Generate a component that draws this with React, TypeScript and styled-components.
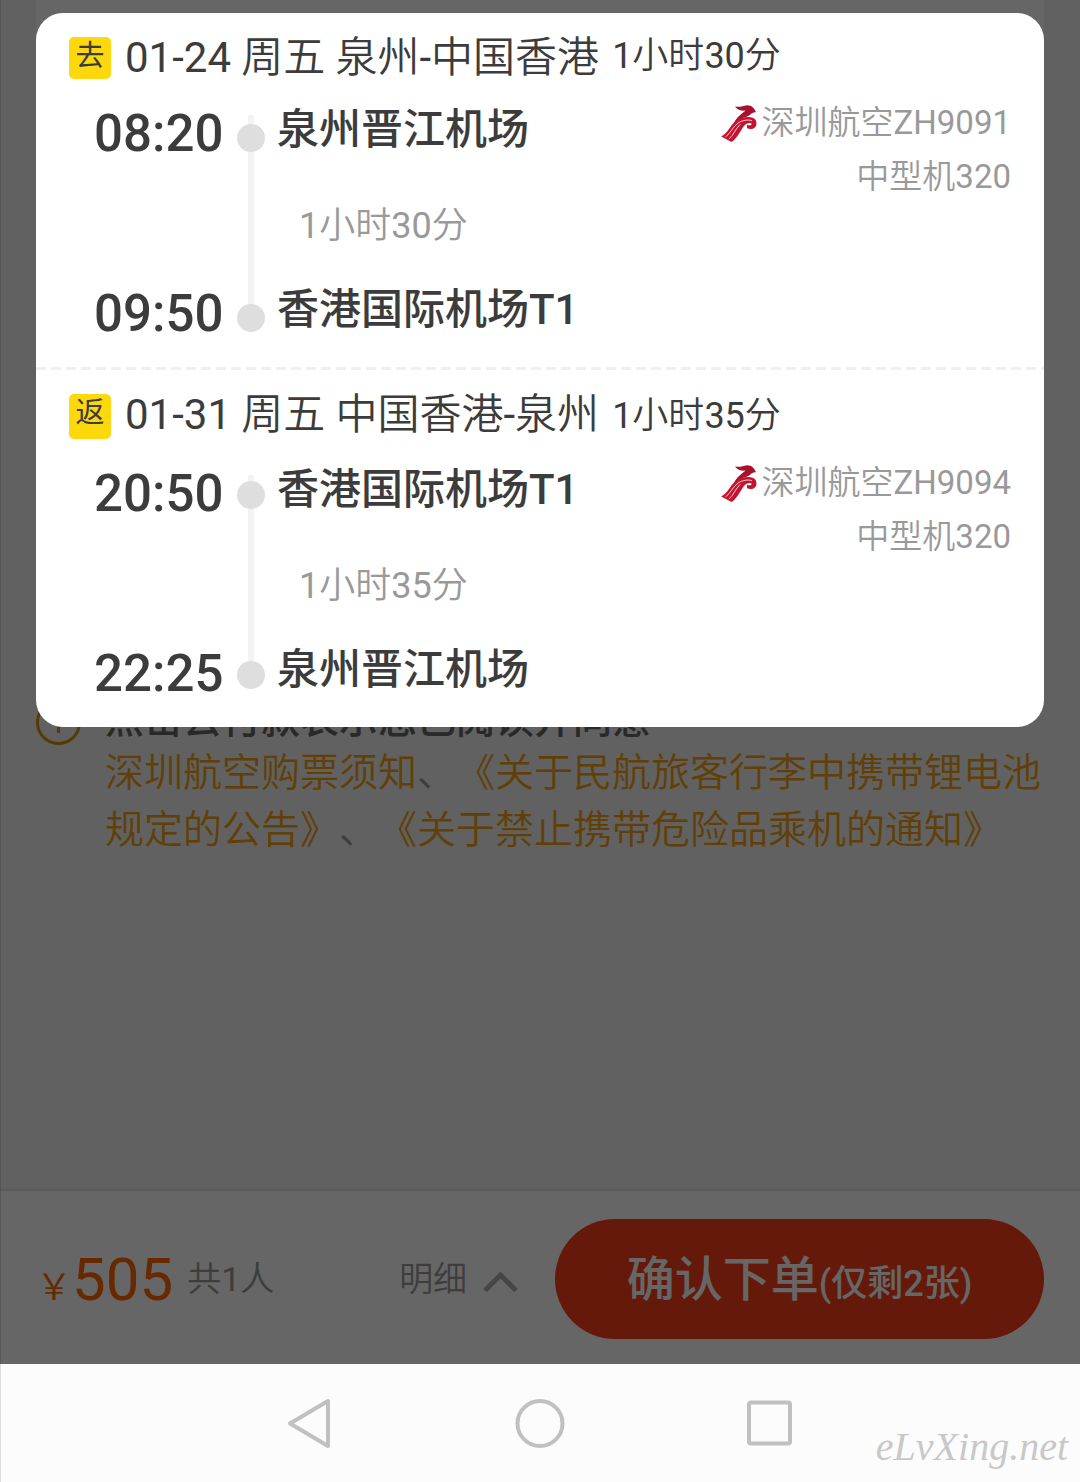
import React from "react";
import styled, { createGlobalStyle } from "styled-components";

const GlobalStyle = createGlobalStyle`
  *, *::before, *::after { box-sizing: border-box; }
  body {
    margin: 0;
    background: #fcfcfc;
    color: #3c3c3c;
    font-family: Roboto, "Noto Sans CJK SC", sans-serif;
    text-spacing-trim: space-all;
  }
  button {
    font: inherit;
    color: inherit;
    border: 0;
    padding: 0;
    background: none;
    cursor: pointer;
  }
`;

const Screen = styled.div`
  display: flex;
  flex-direction: column;
  min-height: 100vh;
  box-shadow: inset 1px 0 #ddd;
`;

const AppArea = styled.div`
  position: relative;
  flex: 1;
  display: flex;
  flex-direction: column;
  background: #f3f3f3;
`;

const Content = styled.main`
  flex: 1;
  padding: 0 36px;
`;

const OrderPanel = styled.section`
  min-height: 666px;
  margin-bottom: 29px;
  background: #fff;
`;

const Notice = styled.section`
  display: flex;
  align-items: flex-start;
  gap: 24px;
  font-size: 39px;
`;

const NoticeIcon = styled.svg`
  flex: none;
  width: 45px;
  height: 45px;
  margin-top: 5px;
`;

const NoticeText = styled.div`
  flex: 1;
  line-height: 57px;
  font-weight: 350;
  color: #999;
`;

const NoticeLead = styled.div`
  line-height: 50px;
  font-weight: 500;
  color: #666;
`;

const NoticeLink = styled.a`
  color: #f0a010;
  text-decoration: none;
`;

const OrderBar = styled.footer`
  display: flex;
  align-items: center;
  padding: 28px 36px 25px;
  border-top: 2px solid #e4e4e4;
  background: #fff;
`;

const Price = styled.div`
  display: flex;
  align-items: baseline;
  padding-top: 10px;
  line-height: 72px;
  font-size: 60px;
  color: #f60;
`;

const Currency = styled.span`
  font-size: 36px;
  font-weight: 350;
`;

const Travellers = styled.span`
  margin-left: 14px;
  font-size: 34px;
  line-height: 40px;
  font-weight: 350;
  color: #999;
`;

const DetailButton = styled.button`
  display: flex;
  align-items: center;
  gap: 16px;
  margin: 0 37px 0 auto;
  font-size: 34px;
  line-height: 40px;
  font-weight: 350;
  color: #999;

  svg {
    margin-top: 6px;
  }
`;

const SubmitButton = styled.button`
  flex: 0 0 48.5%;
  height: 120px;
  padding-bottom: 8px;
  border-radius: 60px;
  background: #fc3f19;
  font-size: 48px;
  font-weight: 500;
  color: #fff;
`;

const Remaining = styled.span`
  font-size: 36px;
`;

const Backdrop = styled.div`
  position: absolute;
  inset: 0;
  padding: 13px 36px;
  background: rgba(0, 0, 0, 0.6);
  box-shadow: inset 1px 0 rgba(0, 0, 0, 0.12);
`;

const Dialog = styled.div`
  border-radius: 27px;
  background: #fff;
`;

const Divider = styled.div`
  height: 3px;
  background: repeating-linear-gradient(90deg, #efefef 0 10px, transparent 10px 15px);
`;

const LegBox = styled.section`
  padding: 24px 33px 22px;
`;

const LegHeader = styled.header`
  display: flex;
  align-items: flex-start;
  margin-bottom: 24px;
`;

const Badge = styled.span<{ $tall?: boolean }>`
  width: 42px;
  height: ${(p) => (p.$tall ? 45 : 42)}px;
  margin-right: 14px;
  border-radius: 5px;
  background: #fcd80c;
  text-align: center;
  font-size: 29px;
  line-height: 38px;
`;

const Route = styled.h2`
  margin: 0 13px 0 0;
  font-size: 42px;
  line-height: 42px;
  font-weight: 350;
`;

const Elapsed = styled.span`
  align-self: flex-end;
  padding-bottom: 4px;
  font-size: 36px;
  line-height: 38px;
  font-weight: 350;
`;

const Num = styled.span`
  font-weight: 400;
`;

const LegBody = styled.div`
  display: flex;
  align-items: flex-start;
`;

const Times = styled.div`
  display: flex;
  flex-direction: column;
  justify-content: space-between;
  width: 168px;
  height: 242px;
  padding-left: 25px;
  font-size: 51px;
  line-height: 62px;
  font-weight: 500;
`;

const Rail = styled.div`
  display: flex;
  flex-direction: column;
  align-items: center;
  width: 28px;
  margin-top: 12px;
`;

const RailLine = styled.span<{ $length: number }>`
  width: 6px;
  height: ${(p) => p.$length}px;
  background: #f3f3f3;
`;

const RailDot = styled.span`
  width: 28px;
  height: 28px;
  border-radius: 50%;
  background: #dedede;
`;

const Stops = styled.div`
  margin-left: 12px;
`;

const Airport = styled.div`
  font-size: 42px;
  line-height: 54px;
  font-weight: 500;
`;

const StopDuration = styled.div`
  margin: 49px 0 37px 22px;
  font-size: 36px;
  line-height: 40px;
  font-weight: 350;
  color: #999;
`;

const Carrier = styled.div`
  display: flex;
  flex-direction: column;
  align-items: flex-end;
  gap: 14px;
  margin-left: auto;
  font-size: 33px;
  line-height: 40px;
  font-weight: 350;
  color: #999;
`;

const CarrierName = styled.div`
  display: flex;
  align-items: center;
  gap: 5px;
`;

const NavBar = styled.nav`
  position: relative;
  display: flex;
  align-items: center;
  justify-content: center;
  gap: 180px;
  height: 118px;
`;

const NavButton = styled.button`
  display: flex;
  width: 50px;
  height: 50px;
`;

const Watermark = styled.span`
  position: absolute;
  right: 12px;
  bottom: 12px;
  font-family: "Liberation Serif", serif;
  font-style: italic;
  font-size: 40px;
  line-height: 46px;
  color: #c8c8c8;
`;

/* Digits and Latin keep the regular weight inside light Chinese text. */
function Mixed({ text }: { text: string }) {
  return (
    <>
      {text.split(/([0-9A-Z-]+)/).map((part, i) => (i % 2 ? <Num key={i}>{part}</Num> : part))}
    </>
  );
}

function AirlineLogo() {
  return (
    <svg width="36" height="37" viewBox="0 0 36 37" fill="none" aria-hidden="true">
      <path
        d="M14 1.4C18 2.600 22 1.200 26 .3 30.500 .2 33.500 3 35 7.400 32.500 7 31 8 29.500 9.600 27.500 11.600 24 12 19 14.200L13 18C15.500 12.500 20 9.500 24.500 5.600 20.500 6 16.500 5 14 1.400Z"
        fill="#a8122c"
      />
      <path
        d="M14 16.500C19 12.300 31 10 34.500 14.800 37.500 20.500 33 26 26 23.200L26 19.500C28.500 21 31 20.500 30.500 18.500 28.500 17 25 18.500 23 21 19.500 25.500 16 34 10.500 37L.2 31.400C6.500 28.500 9.500 20.500 14 16.500Z"
        fill="#c4142f"
      />
      <path
        d="M4.500 32C9.500 28.500 12 21.500 17 18 21 15.600 27 14 31 15.800M8 34C12.500 30 14.500 24 19 19.500"
        stroke="#fbdde0"
        strokeWidth="0.9"
      />
    </svg>
  );
}

interface Leg {
  badge: string;
  route: string;
  elapsed: string;
  departAt: string;
  arriveAt: string;
  from: string;
  to: string;
  flight: string;
  plane: string;
  isReturn?: boolean;
}

const legs: Leg[] = [
  {
    badge: "去",
    route: "01-24 周五 泉州-中国香港",
    elapsed: "1小时30分",
    departAt: "08:20",
    arriveAt: "09:50",
    from: "泉州晋江机场",
    to: "香港国际机场T1",
    flight: "深圳航空ZH9091",
    plane: "中型机320",
  },
  {
    badge: "返",
    route: "01-31 周五 中国香港-泉州",
    elapsed: "1小时35分",
    departAt: "20:50",
    arriveAt: "22:25",
    from: "香港国际机场T1",
    to: "泉州晋江机场",
    flight: "深圳航空ZH9094",
    plane: "中型机320",
    isReturn: true,
  },
];

function FlightLeg({ leg }: { leg: Leg }) {
  return (
    <LegBox>
      <LegHeader>
        <Badge $tall={leg.isReturn}>{leg.badge}</Badge>
        <Route><Mixed text={leg.route} /></Route>
        <Elapsed><Mixed text={leg.elapsed} /></Elapsed>
      </LegHeader>
      <LegBody>
        <Times>
          <time>{leg.departAt}</time>
          <time>{leg.arriveAt}</time>
        </Times>
        <Rail>
          <RailLine $length={leg.isReturn ? 6 : 9} />
          <RailDot />
          <RailLine $length={152} />
          <RailDot />
        </Rail>
        <Stops>
          <Airport>{leg.from}</Airport>
          <StopDuration><Mixed text={leg.elapsed} /></StopDuration>
          <Airport>{leg.to}</Airport>
        </Stops>
        <Carrier>
          <CarrierName>
            <AirlineLogo />
            <span><Mixed text={leg.flight} /></span>
          </CarrierName>
          <span><Mixed text={leg.plane} /></span>
        </Carrier>
      </LegBody>
    </LegBox>
  );
}

export default function App() {
  return (
    <>
      <GlobalStyle />
      <Screen>
        <AppArea>
          <Content>
            <OrderPanel />
            <Notice>
              <NoticeIcon viewBox="0 0 45 45" fill="none" stroke="#d8920f" strokeWidth="3" aria-hidden="true">
                <circle cx="22.5" cy="22.5" r="21" />
                <path d="M22.500 18V33M22.500 11V14" />
              </NoticeIcon>
              <NoticeText>
                <NoticeLead>点击去付款表示您已阅读并同意</NoticeLead>
                <NoticeLink href="#ticket">深圳航空购票须知</NoticeLink>、
                <NoticeLink href="#battery">《关于民航旅客行李中携带锂电池规定的公告》</NoticeLink>、
                <NoticeLink href="#danger">《关于禁止携带危险品乘机的通知》</NoticeLink>
              </NoticeText>
            </Notice>
          </Content>
          <OrderBar>
            <Price>
              <Currency>￥</Currency>505
            </Price>
            <Travellers><Mixed text="共1人" /></Travellers>
            <DetailButton type="button">
              明细
              <svg width="35" height="22" viewBox="0 0 35 22" fill="none" stroke="#b0b0b0" strokeWidth="5" aria-hidden="true">
                <path d="M2 19.500 17.500 4 33 19.500" />
              </svg>
            </DetailButton>
            <SubmitButton type="button">
              确认下单<Remaining>(仅剩2张)</Remaining>
            </SubmitButton>
          </OrderBar>
          <Backdrop>
            <Dialog role="dialog" aria-label="航班信息">
              <FlightLeg leg={legs[0]} />
              <Divider />
              <FlightLeg leg={legs[1]} />
            </Dialog>
          </Backdrop>
        </AppArea>
        <NavBar>
          <NavButton type="button" aria-label="返回">
            <svg width="50" height="50" viewBox="0 0 50 50" fill="none" stroke="#c0c0c0" strokeWidth="4" strokeLinejoin="round">
              <path d="M43 3V48L5 25.500Z" />
            </svg>
          </NavButton>
          <NavButton type="button" aria-label="主页">
            <svg width="50" height="50" viewBox="0 0 50 50" fill="none" stroke="#c0c0c0" strokeWidth="4">
              <circle cx="25" cy="25.500" r="22.500" />
            </svg>
          </NavButton>
          <NavButton type="button" aria-label="最近任务">
            <svg width="50" height="50" viewBox="0 0 50 50" fill="none" stroke="#c0c0c0" strokeWidth="4">
              <rect x="4" y="4.500" width="41" height="41" rx="2" />
            </svg>
          </NavButton>
          <Watermark>eLvXing.net</Watermark>
        </NavBar>
      </Screen>
    </>
  );
}
